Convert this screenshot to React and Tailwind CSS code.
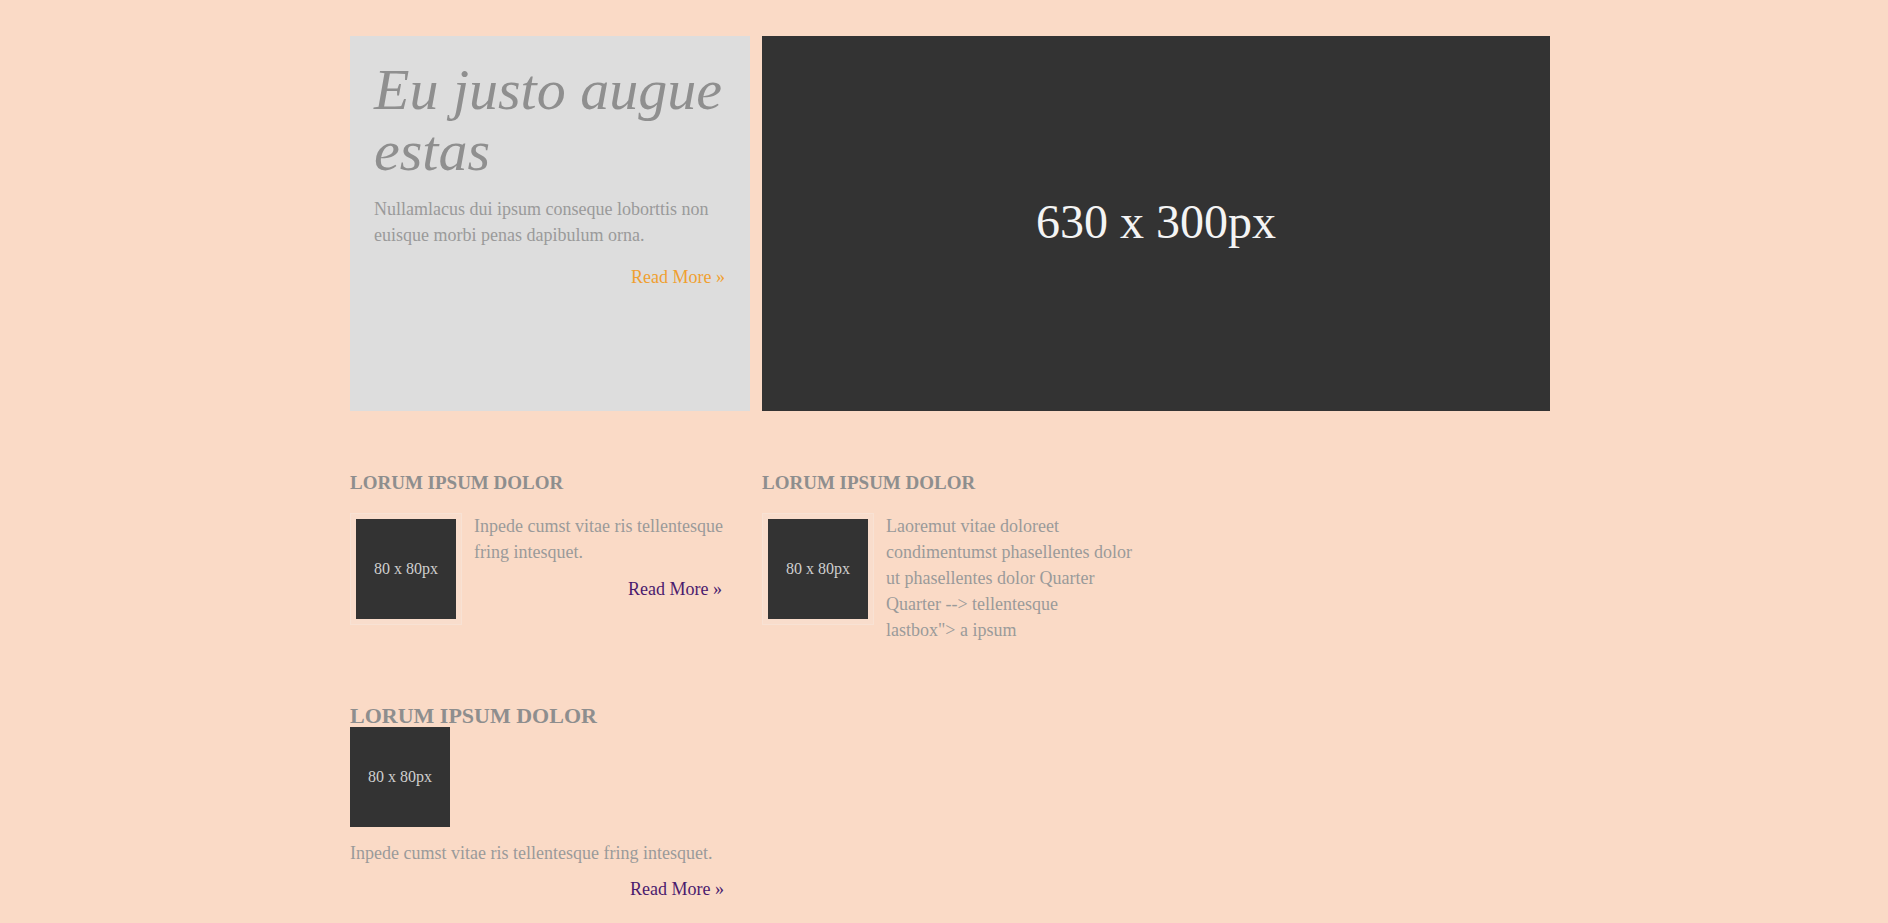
const serif = { fontFamily: '"Liberation Serif", "Times New Roman", serif' }

function Thumb({ framed = true }) {
  const box = (
    <div className="flex h-[100px] w-[100px] items-center justify-center bg-[#333333] text-[16px] text-[#cfcfcf]">
      80 x 80px
    </div>
  )
  if (!framed) return box
  return <div className="shrink-0 self-start border border-[#f8e2d4] bg-[#f9ddcc] p-[5px]">{box}</div>
}

function Teaser({ title, children, more }) {
  return (
    <div className="w-[375px]">
      <h3 className="text-[19px] font-bold uppercase leading-[24px] text-[#8e8e8e]">{title}</h3>
      <div className="mt-[18px] flex gap-[12px]">
        <Thumb />
        <div className="w-[254px] shrink-0">
          <p className="text-[18px] leading-[26px] text-[#9a9a9a]">{children}</p>
          {more && (
            <div className="mt-[11px] pr-[6px] text-right text-[18px] leading-[26px] text-[#4b1a6e]">Read More »</div>
          )}
        </div>
      </div>
    </div>
  )
}

const lastText =
  'Laoremut vitae doloreet condimentumst phasellentes dolor ut phasellentes dolor Quarter Quarter --> tellentesque'

export default function App() {
  return (
    <div className="min-h-screen bg-[#fadac6] pb-10 pt-[36px]" style={serif}>
      <div className="ml-[350px] w-[1200px]">
        {/* Featured */}
        <div className="flex h-[375px] gap-[12px]">
          <div className="w-[400px] bg-[#dddddd] px-6 pt-[23px]">
            <h1 className="text-[58px] italic leading-[61px] text-[#8f8f8f]">Eu justo augue estas</h1>
            <p className="mt-[15px] text-[18px] leading-[26px] text-[#9a9a9a]">
              Nullamlacus dui ipsum conseque loborttis non euisque morbi penas dapibulum orna.
            </p>
            <div className="mt-[16px] pr-[1px] text-right text-[18px] leading-[26px] text-[#f0a030]">Read More »</div>
          </div>
          <div className="flex flex-1 items-center justify-center bg-[#333333]">
            <span className="pb-[4px] text-[48px] text-[#f4f4f4]">630 x 300px</span>
          </div>
        </div>

        {/* Teasers */}
        <div className="mt-[60px] flex gap-[37px]">
          <Teaser title="Lorum ipsum dolor" more>
            Inpede cumst vitae ris tellentesque fring intesquet.
          </Teaser>
          <Teaser title="Lorum ipsum dolor">
            {lastText}
            <br />
            {'lastbox"> a ipsum'}
          </Teaser>
        </div>

        {/* Single */}
        <div className="mt-[61px] w-[375px]">
          <h3 className="text-[22px] font-bold uppercase leading-[23px] text-[#8e8e8e]">Lorum ipsum dolor</h3>
          <Thumb framed={false} />
          <p className="mt-[13px] text-[18px] leading-[26px] text-[#9a9a9a]">
            Inpede cumst vitae ris tellentesque fring intesquet.
          </p>
          <div className="mt-[10px] pr-[1px] text-right text-[18px] leading-[26px] text-[#4b1a6e]">Read More »</div>
        </div>
      </div>
    </div>
  )
}
